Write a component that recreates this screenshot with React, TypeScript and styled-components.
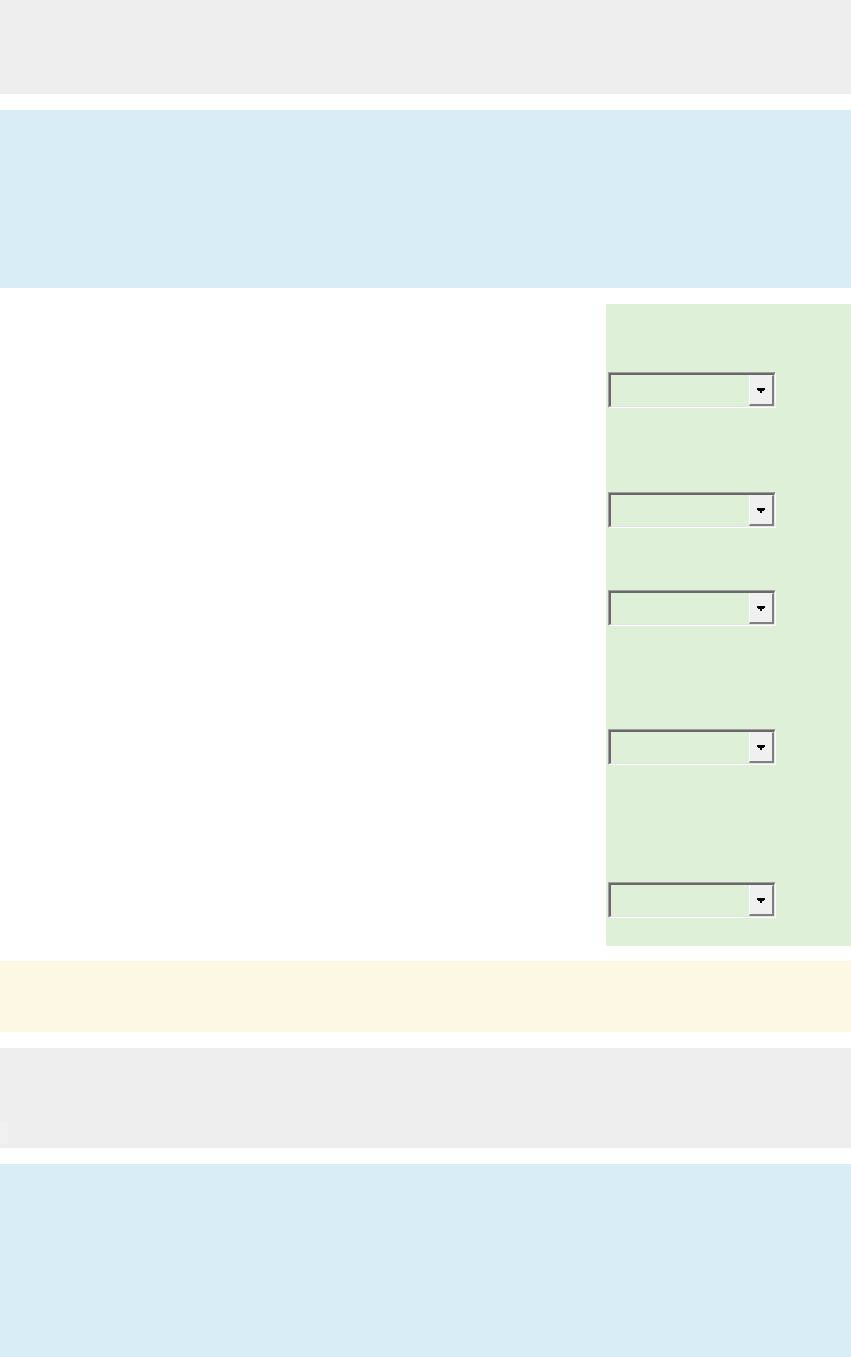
import React from 'react';
import styled, { createGlobalStyle } from 'styled-components';

const GlobalStyle = createGlobalStyle`
  html, body {
    margin: 0;
    padding: 0;
    background-color: #fff;
    font-family: 'Liberation Sans', Arial, sans-serif;
  }
`;

const Page = styled.div`
  display: flex;
  flex-direction: column;
  gap: 16px;
  width: 851px;
`;

const Band = styled.div<{ $bg: string; $height: number }>`
  position: relative;
  background-color: ${(p) => p.$bg};
  min-height: ${(p) => p.$height}px;
`;

const Marker = styled.div`
  position: absolute;
  left: 0;
  bottom: 4px;
  width: 8px;
  height: 22px;
  background-color: #f1f1f1;
`;

const MainRow = styled.div`
  display: flex;
  height: 642px;
  margin-bottom: -1px;
`;

const Content = styled.div`
  flex: 1;
`;

const Sidebar = styled.aside`
  width: 245px;
  background-color: #dff0d8;
  padding: 0 0 0 2px;
  box-sizing: border-box;
  display: flex;
  flex-direction: column;
`;

const Field = styled.div<{ $space: number }>`
  padding-top: ${(p) => p.$space}px;
`;

const SelectBox = styled.div`
  width: 168px;
  height: 36px;
  box-sizing: border-box;
  border-top: 1px solid #a0a0a0;
  border-left: 1px solid #a0a0a0;
  border-bottom: 1px solid #ffffff;
  border-right: 1px solid #ffffff;
`;

const SelectInner = styled.div`
  height: 100%;
  box-sizing: border-box;
  border-top: 2px solid #696969;
  border-left: 2px solid #696969;
  border-bottom: 1px solid #e3e3e3;
  border-right: 1px solid #e3e3e3;
  display: flex;
  justify-content: flex-end;
`;

const DropButton = styled.div`
  width: 25px;
  height: 100%;
  box-sizing: border-box;
  background-color: #f0f0f0;
  border-top: 1px solid #f0f0f0;
  border-left: 1px solid #f8f8f8;
  border-right: 2px solid #808080;
  border-bottom: 2px solid #808080;
  display: flex;
  align-items: center;
  justify-content: center;
`;

const Arrow = () => (
  <svg width="8" height="5" viewBox="0 0 8 5">
    <path d="M0 0h8v2H7v1H5v2H3V3H1V2H0z" fill="#000" />
  </svg>
);

const Select = () => (
  <SelectBox>
    <SelectInner>
      <DropButton>
        <Arrow />
      </DropButton>
    </SelectInner>
  </SelectBox>
);

const fieldSpacing = [68, 84, 62, 103, 117];

export default function App() {
  return (
    <>
      <GlobalStyle />
      <Page>
        <Band $bg="#eeeeee" $height={94} />
        <Band $bg="#d9edf7" $height={178} />
        <MainRow>
          <Content />
          <Sidebar>
            {fieldSpacing.map((space, i) => (
              <Field key={i} $space={space}>
                <Select />
              </Field>
            ))}
          </Sidebar>
        </MainRow>
        <Band $bg="#fcf8e3" $height={71} />
        <Band $bg="#eeeeee" $height={100}>
          <Marker />
        </Band>
        <Band $bg="#d9edf7" $height={194} />
      </Page>
    </>
  );
}
